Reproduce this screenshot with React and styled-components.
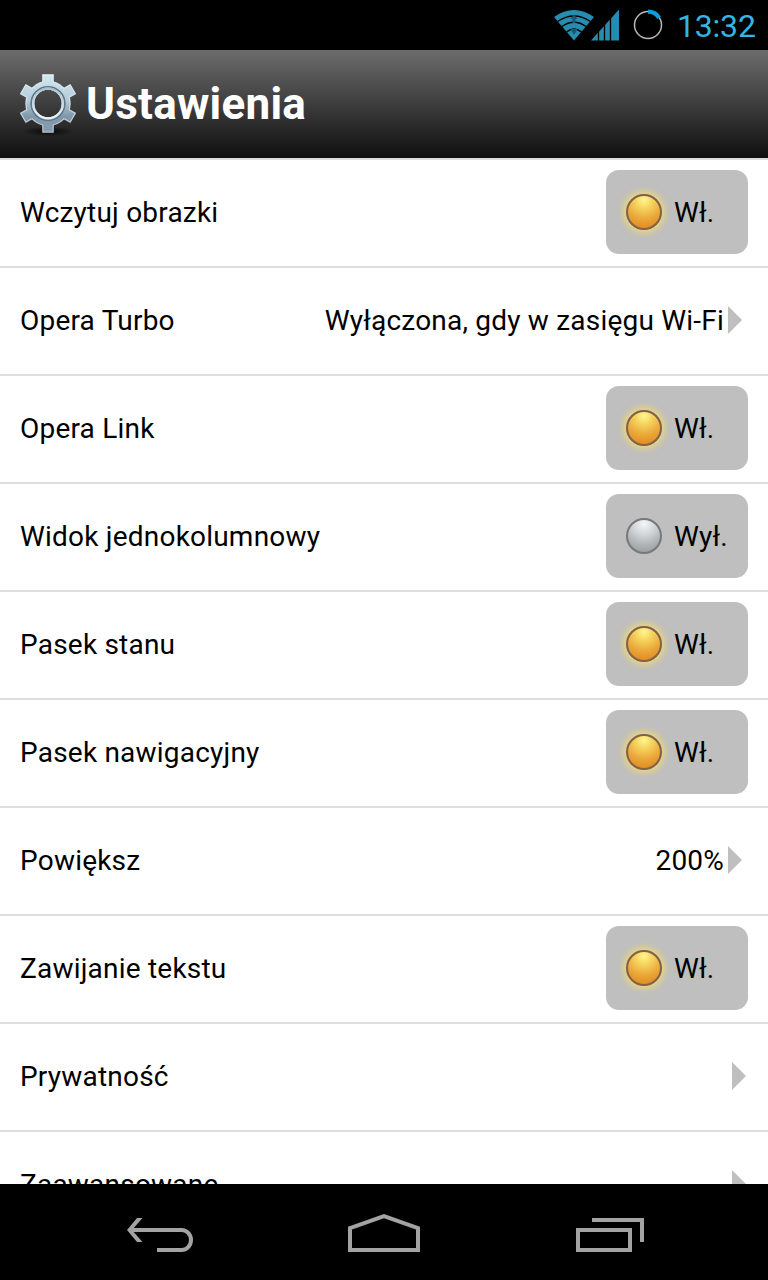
import React from 'react';
import styled, { createGlobalStyle } from 'styled-components';

const GlobalStyle = createGlobalStyle`
  * { box-sizing: border-box; }
  body { margin: 0; background: #000; font-family: Roboto, "Liberation Sans", sans-serif; }
`;

const Screen = styled.div`
  display: flex;
  flex-direction: column;
  width: 768px;
  height: 1280px;
  overflow: hidden;
  background: #fff;
`;

const StatusBar = styled.div`
  display: flex;
  flex: none;
  align-items: center;
  justify-content: flex-end;
  height: 50px;
  padding-right: 13px;
  background: #000;
`;

const Clock = styled.span`
  width: 78px;
  margin-left: 13px;
  padding-top: 2px;
  color: #33b5e5;
  font-size: 32px;
  line-height: 48px;
  white-space: nowrap;
  letter-spacing: -0.2px;
`;

const Header = styled.header`
  display: flex;
  flex: none;
  align-items: center;
  height: 108px;
  padding-left: 18px;
  background: linear-gradient(#6c6c6c, #0f0f0f);
`;

const Title = styled.h1`
  margin: 0 0 0 8px;
  color: #fff;
  font-size: 44px;
  font-weight: 700;
  line-height: 54px;
  letter-spacing: 0.25px;
`;

const List = styled.main`
  flex: 1;
  min-height: 0;
  overflow: hidden;
`;

const Row = styled.div`
  display: flex;
  align-items: center;
  justify-content: space-between;
  height: 108px;
  padding: 10px 20px 12px;
  border-top: 2px solid #dedede;
`;

const Label = styled.span`
  padding-top: 2px;
  color: #000;
  font-size: 28px;
  line-height: 34px;
  white-space: nowrap;
  letter-spacing: 0.21px;
`;

const Toggle = styled.div`
  display: flex;
  align-items: center;
  width: 142px;
  height: 84px;
  padding-left: 20px;
  border-radius: 13px;
  background: #bfbfbf;
`;

const Lamp = styled.span`
  width: 36px;
  height: 36px;
  margin-right: 12px;
  border: 2.5px solid ${(p) => (p.$on ? '#80614c' : '#77797b')};
  border-radius: 50%;
  background: ${(p) =>
    p.$on
      ? 'radial-gradient(circle at 50% 12%, #fff68e 0%, #f6d660 25%, #eba93b 58%, #e18a20 90%)'
      : 'radial-gradient(circle at 50% 12%, #f3f5f6 0%, #d6dadc 30%, #b3b7ba 62%, #94999c 95%)'};
  box-shadow: ${(p) => (p.$on ? '0 0 7px 2px rgba(255, 224, 92, 0.85)' : 'none')};
`;

const Value = styled.div`
  display: flex;
  align-items: center;
  margin-right: ${(p) => (p.$bare ? '-18px' : '-14px')};
`;

const Arrow = styled.span`
  width: 14px;
  height: 28px;
  margin: 0 20px 0 4px;
  background: #bfbfbf;
  clip-path: polygon(0 0, 100% 50%, 0 100%);
`;

const NavBar = styled.nav`
  display: flex;
  flex: none;
  align-items: flex-start;
  justify-content: center;
  gap: 152px;
  height: 96px;
  padding-top: 28px;
  background: #000;
`;

const WifiGlyph = styled.svg`
  margin-right: -2.500px;
`;

const WifiIcon = () => (
  <WifiGlyph width="40" height="32" viewBox="0 0 40 32" fill="none">
    <path d="M0 8Q20-6 40 8L20 31.5Z" fill="#278cb0" />
    <path d="M3.5 12.5Q20 1.5 36.5 12.5M8 17.5Q20 9 32 17.5M12.5 23Q20 17 27.5 23" stroke="#000" strokeWidth="1.5" />
    <path d="M20 5.5L23.5 10H21.5V14H18.5V10H16.5ZM20 26L16.5 20H23.5Z" fill="#145a72" />
  </WifiGlyph>
);

const SignalIcon = () => (
  <svg width="29" height="32" viewBox="0 0 29 32">
    <path d="M0 31.500L28 0.500V31.500Z" fill="#278cb0" />
    <path d="M7.5 20V32M13.5 14V32M19.5 8V32" stroke="#000" strokeWidth="1.3" />
  </svg>
);

const BatteryRing = styled.svg`
  margin-left: 12px;
`;

const BatteryIcon = () => (
  <BatteryRing width="32" height="32" viewBox="0 0 32 32" fill="none">
    <circle cx="16" cy="16" r="13.5" stroke="#b8b8b8" strokeWidth="1.5" />
    <path d="M16 2.7A13.3 13.3 0 0 1 27.2 8.8" stroke="#0a9fd8" strokeWidth="4.2" />
  </BatteryRing>
);

const toothAngles = [0, 60, 120, 180, 240, 300];

const GearIcon = () => (
  <svg width="60" height="68" viewBox="0 -3.5 60 68" fill="none">
    <defs>
      <linearGradient id="steel" gradientUnits="userSpaceOnUse" x1="30" y1="0" x2="30" y2="60">
        <stop offset="0" stopColor="#d3e8f0" />
        <stop offset="0.45" stopColor="#b4cbd8" />
        <stop offset="0.72" stopColor="#8097ab" />
        <stop offset="1" stopColor="#8b9caf" />
      </linearGradient>
      <linearGradient id="rim" gradientUnits="userSpaceOnUse" x1="30" y1="0" x2="30" y2="60">
        <stop offset="0" stopColor="#e6f6fa" />
        <stop offset="1" stopColor="#b4c3d0" />
      </linearGradient>
      <linearGradient id="ring" x1="0" y1="0" x2="0" y2="1">
        <stop offset="0" stopColor="#a9c2cf" />
        <stop offset="1" stopColor="#edf5fa" />
      </linearGradient>
      <radialGradient id="shadow">
        <stop offset="0" stopColor="#000" stopOpacity="0.8" />
        <stop offset="1" stopColor="#000" stopOpacity="0" />
      </radialGradient>
      <mask id="outer" maskUnits="userSpaceOnUse" x="0" y="0" width="60" height="60">
        <circle cx="30" cy="30" r="18.2" stroke="#fff" strokeWidth="9" />
        {toothAngles.map((a) => (
          <path key={a} d="M24.2 0.800H35.8V10L38 13H22L24.2 10Z" fill="#fff" transform={`rotate(${a} 30 30)`} />
        ))}
      </mask>
      <mask id="inner" maskUnits="userSpaceOnUse" x="0" y="0" width="60" height="60">
        <circle cx="30" cy="30" r="17.6" stroke="#fff" strokeWidth="7.8" />
        {toothAngles.map((a) => (
          <path key={a} d="M25.4 2H34.6V11L36 13H24L25.4 11Z" fill="#fff" transform={`rotate(${a} 30 30)`} />
        ))}
      </mask>
    </defs>
    <ellipse cx="30" cy="58" rx="26" ry="5" fill="url(#shadow)" />
    <rect width="60" height="60" fill="url(#rim)" mask="url(#outer)" />
    <rect width="60" height="60" fill="url(#steel)" mask="url(#inner)" />
    <circle cx="30" cy="30" r="16.8" stroke="#5d7585" strokeWidth="1.6" />
    <circle cx="30" cy="30" r="14.9" stroke="url(#ring)" strokeWidth="2.2" />
  </svg>
);

const BackIcon = () => (
  <svg width="72" height="40" viewBox="124 1212 72 40" fill="none" stroke="#a3a3a3" strokeWidth="4">
    <path d="M129 1230H181.5A9.5 10 0 0 1 181.5 1250H157" />
    <path d="M127 1230L137 1218H142.500L132 1230L142.500 1242H137Z" fill="#a3a3a3" stroke="none" />
  </svg>
);

const HomeIcon = () => (
  <svg width="72" height="40" viewBox="348 1212 72 40" fill="none" stroke="#a3a3a3" strokeWidth="4">
    <path d="M350 1250V1228.200L384 1216.200L418 1228.200V1250Z" />
  </svg>
);

const RecentsIcon = () => (
  <svg width="72" height="40" viewBox="572 1212 72 40" fill="none" stroke="#a3a3a3" strokeWidth="4">
    <path d="M578 1230H630V1250H578ZM592 1220H642V1242" />
  </svg>
);

const settings = [
  { label: 'Wczytuj obrazki', on: true },
  { label: 'Opera Turbo', value: 'Wyłączona, gdy w zasięgu Wi-Fi' },
  { label: 'Opera Link', on: true },
  { label: 'Widok jednokolumnowy', on: false },
  { label: 'Pasek stanu', on: true },
  { label: 'Pasek nawigacyjny', on: true },
  { label: 'Powiększ', value: '200%' },
  { label: 'Zawijanie tekstu', on: true },
  { label: 'Prywatność' },
  { label: 'Zaawansowane' },
];

const Setting = ({ label, on, value }) => (
  <Row>
    <Label>{label}</Label>
    {on !== undefined ? (
      <Toggle>
        <Lamp $on={on} />
        <Label>{on ? 'Wł.' : 'Wył.'}</Label>
      </Toggle>
    ) : (
      <Value $bare={!value}>
        {value && <Label>{value}</Label>}
        <Arrow />
      </Value>
    )}
  </Row>
);

export default function App() {
  return (
    <>
      <GlobalStyle />
      <Screen>
        <StatusBar>
          <WifiIcon />
          <SignalIcon />
          <BatteryIcon />
          <Clock>13:32</Clock>
        </StatusBar>
        <Header>
          <GearIcon />
          <Title>Ustawienia</Title>
        </Header>
        <List>
          {settings.map((s) => (
            <Setting key={s.label} {...s} />
          ))}
        </List>
        <NavBar>
          <BackIcon />
          <HomeIcon />
          <RecentsIcon />
        </NavBar>
      </Screen>
    </>
  );
}
